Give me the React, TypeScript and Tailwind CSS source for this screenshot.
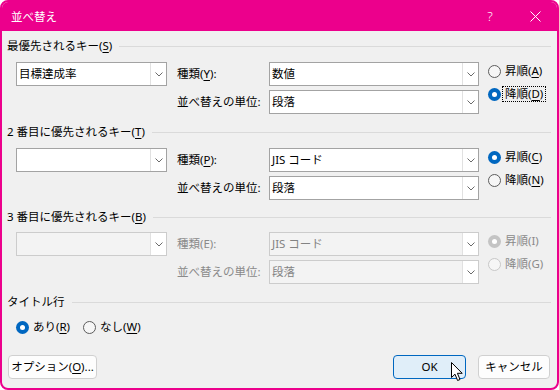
import clsx from "clsx";

type RadioProps = {
  checked?: boolean;
  disabled?: boolean;
  focused?: boolean;
  children: React.ReactNode;
};

function Chevron() {
  return (
    <svg width="8" height="5" viewBox="0 0 8 5" fill="none">
      <path d="M0.5 0.5 L4 4 L7.5 0.5" stroke="#6A6A6A" strokeWidth="1" />
    </svg>
  );
}

function Combo({ value, className, disabled }: { value?: React.ReactNode; className: string; disabled?: boolean }) {
  return (
    <div
      className={clsx(
        "flex h-[24px] border",
        disabled ? "border-[#CCCCCC] bg-[#F3F3F3] text-[#838383]" : "border-[#A3A3A3] bg-white text-black",
        className
      )}
    >
      <div className="flex flex-1 items-center overflow-hidden pl-[2px] leading-[22px]">{value}</div>
      <div className="flex w-[16px] items-center justify-center border-l border-[#E1E1E1] bg-white">
        <Chevron />
      </div>
    </div>
  );
}

function Radio({ checked, disabled, focused, children }: RadioProps) {
  return (
    <div className="flex h-[18px] items-center gap-[1px]">
      {checked ? (
        <span
          className={clsx(
            "flex h-[13px] w-[13px] items-center justify-center rounded-full",
            disabled ? "bg-[#C4C4C4]" : "bg-[#0067C0]"
          )}
        >
          <span className="h-[5px] w-[5px] rounded-full bg-white" />
        </span>
      ) : (
        <span
          className={clsx(
            "h-[13px] w-[13px] rounded-full border bg-[#F6F6F6]",
            disabled ? "border-[#C8C8C8]" : "border-[#5C5C5C]"
          )}
        />
      )}
      <span
        className={clsx(
          "border px-[2px] leading-[14px]",
          focused ? "border-dotted border-black" : "border-transparent",
          disabled ? "text-[#8A8A8A]" : "text-black"
        )}
      >
        {children}
      </span>
    </div>
  );
}

function Heading({ children }: { children: React.ReactNode }) {
  return (
    <div className="flex h-[16px] items-center pl-[5px]">
      <span className="leading-[16px] text-black">{children}</span>
      <div className="ml-[7px] h-px flex-1 bg-[#DADADA]" />
    </div>
  );
}

function Key({ k }: { k: string }) {
  return <span className="underline underline-offset-[2px]">{k}</span>;
}

type SectionProps = {
  first?: string;
  kind: React.ReactNode;
  kindValue: string;
  disabled?: boolean;
  asc: React.ReactNode;
  desc: React.ReactNode;
  descChecked?: boolean;
  focusDesc?: boolean;
};

function KeyRows({ first, kind, kindValue, disabled, asc, desc, descChecked, focusDesc }: SectionProps) {
  const labelColor = disabled ? "text-[#8A8A8A]" : "text-black";
  return (
    <div className="flex pl-[14px]">
      <Combo className="w-[151px]" value={first} disabled={disabled} />
      <div className={clsx("ml-[10px] flex w-[92px] flex-col gap-[4px]", labelColor)}>
        <div className="flex h-[24px] items-center">{kind}</div>
        <div className="flex h-[24px] items-center">並べ替えの単位:</div>
      </div>
      <div className="flex w-[210px] flex-col gap-[4px]">
        <Combo className="w-full" value={kindValue} disabled={disabled} />
        <Combo className="w-full" value="段落" disabled={disabled} />
      </div>
      <div className="ml-[9px] flex flex-col gap-[5px]">
        <Radio checked={!descChecked} disabled={disabled}>
          {asc}
        </Radio>
        <Radio checked={descChecked} disabled={disabled} focused={focusDesc}>
          {desc}
        </Radio>
      </div>
    </div>
  );
}

export default function App() {
  return (
    <div className="h-[390px] w-[559px] bg-white [font-family:'Noto_Sans','Noto_Sans_CJK_JP',sans-serif] text-[11.5px]">
      <div className="relative flex h-full w-full flex-col overflow-hidden rounded-[8px] border-2 border-[#EC008C] bg-[#F0F0F0]">
        <div className="flex h-[29px] shrink-0 items-center bg-[#EC008C] text-white">
          <span className="flex-1 pl-[9px] leading-[16px]">並べ替え</span>
          <div className="flex h-full w-[46px] items-center justify-center text-[13px] font-light">?</div>
          <div className="flex h-full w-[44px] items-center justify-center">
            <svg width="11" height="11" viewBox="0 0 11 11">
              <path d="M0.5 0.5 L10.5 10.5 M10.5 0.5 L0.5 10.5" stroke="white" strokeWidth="1" />
            </svg>
          </div>
        </div>

        <div className="flex flex-1 flex-col pr-[6px] pt-[7px]">
          <Heading>
            最優先されるキー(<Key k="S" />)
          </Heading>
          <div className="mt-[8px]">
            <KeyRows
              first="目標達成率"
              kind={<span>種類(<Key k="Y" />):</span>}
              kindValue="数値"
              asc={<span>昇順(<Key k="A" />)</span>}
              desc={<span>降順(<Key k="D" />)</span>}
              descChecked
              focusDesc
            />
          </div>

          <div className="mt-[10px]">
            <Heading>
              2 番目に優先されるキー(<Key k="T" />)
            </Heading>
          </div>
          <div className="mt-[8px]">
            <KeyRows
              kind={<span>種類(<Key k="P" />):</span>}
              kindValue="JIS コード"
              asc={<span>昇順(<Key k="C" />)</span>}
              desc={<span>降順(<Key k="N" />)</span>}
            />
          </div>

          <div className="mt-[9px]">
            <Heading>
              3 番目に優先されるキー(<Key k="B" />)
            </Heading>
          </div>
          <div className="mt-[7px]">
            <KeyRows
              kind={<span>種類(E):</span>}
              kindValue="JIS コード"
              disabled
              asc={<span>昇順(I)</span>}
              desc={<span>降順(G)</span>}
            />
          </div>

          <div className="mt-[10px]">
            <Heading>タイトル行</Heading>
          </div>
          <div className="mt-[8px] flex h-[18px] items-center gap-[10px] pl-[14px]">
            <Radio checked>
              <span>あり(<Key k="R" />)</span>
            </Radio>
            <Radio>
              <span>なし(<Key k="W" />)</span>
            </Radio>
          </div>

          <div className="mt-[19px] flex items-center pl-[6px] pr-[1px]">
            <button className="flex h-[24px] w-[89px] items-center justify-center rounded-[4px] border border-[#D0D0D0] bg-[#FDFDFD] text-black">
              オプション(<Key k="O" />)...
            </button>
            <div className="flex-1" />
            <button className="relative flex h-[24px] w-[73px] items-center justify-center rounded-[4px] border border-[#0067C0] bg-[#E0EEF9] text-black">
              OK
              <svg className="absolute left-[57px] top-[6px]" width="13" height="20" viewBox="0 0 13 20">
                <path
                  d="M0.5 0.5 L0.5 15.5 L4 12.2 L6.6 18.5 L9 17.5 L6.4 11.3 L11.2 11.3 Z"
                  fill="white"
                  stroke="black"
                  strokeWidth="1"
                  strokeLinejoin="round"
                />
              </svg>
            </button>
            <button className="ml-[12px] flex h-[24px] w-[72px] items-center justify-center rounded-[4px] border border-[#D0D0D0] bg-[#FDFDFD] text-black">
              キャンセル
            </button>
          </div>
        </div>
      </div>
    </div>
  );
}
